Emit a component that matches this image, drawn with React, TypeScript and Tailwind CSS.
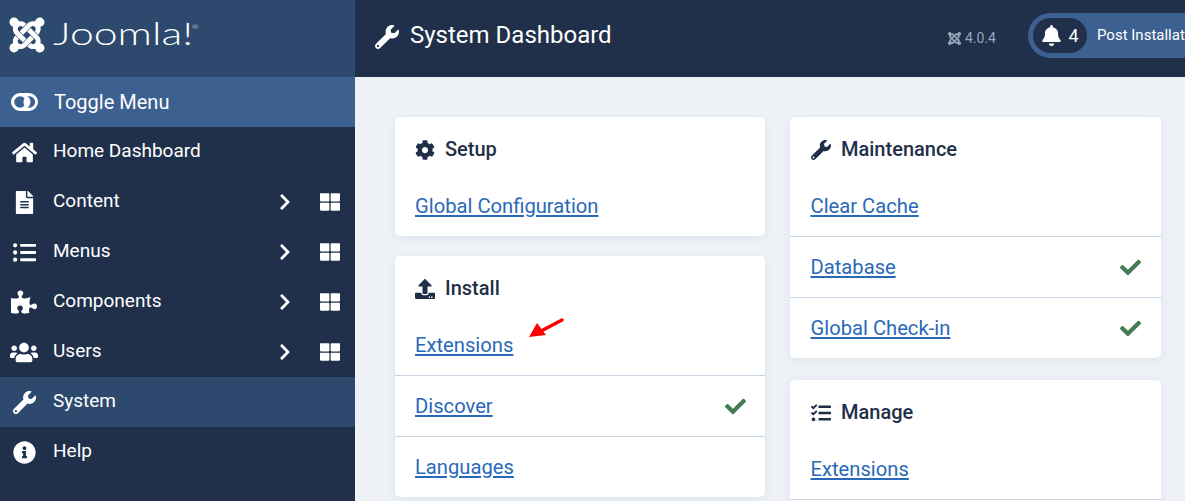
import React from "react";
import { FaJoomla, FaHome, FaFileAlt, FaListUl, FaPuzzlePiece, FaUsers, FaWrench, FaInfoCircle, FaCog, FaBell, FaCheck, FaTasks, FaChevronRight, FaThLarge, FaUpload } from "react-icons/fa";

type MenuProps = { icon: React.ReactNode; label: string; sub?: boolean; active?: boolean };

function MenuRow({ icon, label, sub, active }: MenuProps) {
  return (
    <div className={`flex h-[50px] items-center pl-[10px] text-[19px] text-white ${active ? "bg-[#2d4a6e]" : ""}`}>
      <span className="flex w-[28px] justify-center">{icon}</span>
      <span className="ml-[15px] pb-[2px]">{label}</span>
      {sub && (
        <span className="ml-auto flex items-center pr-[15px]">
          <FaChevronRight className="mr-[26px] text-[18px]" />
          <FaThLarge className="text-[20px]" />
        </span>
      )}
    </div>
  );
}

function LinkRow({ label, check, first, wide }: { label: string; check?: boolean; first?: boolean; wide?: boolean }) {
  return (
    <div className={`flex h-[61px] items-center justify-between ${wide ? "pl-[20.5px] pr-[20px]" : "pl-[20px] pr-[19px]"} ${first ? "pt-[1px]" : "border-t border-[#c9d5e5]"}`}>
      <a className="text-[20.2px] text-[#2a69b8] underline" href="#">{label}</a>
      {check && <FaCheck className="text-[21px] text-[#457d54]" />}
    </div>
  );
}

function Card({ icon, title, wide, children }: { icon: React.ReactNode; title: string; wide?: boolean; children: React.ReactNode }) {
  return (
    <section className="rounded-[5px] bg-white shadow-[0_2px_8px_rgba(30,50,90,0.08)]">
      <h2 className={`flex h-[58px] items-end pb-[14px] text-[20px] font-medium leading-[24px] text-[#1f2f48] ${wide ? "pl-[21px]" : "pl-[20px]"}`}>
        <span className="flex w-[30px] items-center pb-[1px]">{icon}</span>
        {title}
      </h2>
      {children}
    </section>
  );
}

export default function App() {
  return (
    <div className="flex h-screen w-full overflow-hidden bg-[#eef2f7] font-['Roboto',sans-serif]">
      <aside className="w-[355px] shrink-0 bg-[#20304a]">
        <div className="flex h-[77px] items-start bg-[#2d4a6e] pl-[7px] pt-[15px] text-white">
          <FaJoomla className="text-[40px]" />
          <span className="ml-[6px] mt-[-1px] origin-left scale-x-[1.38] font-['Lato',sans-serif] text-[31px] font-light leading-[38px]">
            Joomla!<span className="ml-[-1px] align-[16px] text-[6px] leading-none">®</span>
          </span>
        </div>
        <div className="flex h-[50px] items-center bg-[#3c6090] pl-[11px] text-[20px] text-white">
          <svg width="27" height="18" viewBox="0 0 27 18" aria-hidden="true">
            <path fill="#fff" fillRule="evenodd" d="M9 0h9a9 9 0 0 1 0 18H9A9 9 0 0 1 9 0Zm0 3.2a5.8 5.8 0 0 0 0 11.6 5.8 5.8 0 0 0 4.5-2.2 7.5 7.5 0 0 1 0-7.2A5.8 5.8 0 0 0 9 3.2Zm7.5 0a7 7 0 0 1-.2 11.6h2a5.8 5.8 0 0 0 0-11.6Z" />
          </svg>
          <span className="ml-[16px]">Toggle Menu</span>
        </div>
        <MenuRow icon={<FaHome className="text-[25px]" />} label="Home Dashboard" />
        <MenuRow icon={<FaFileAlt className="text-[23px]" />} label="Content" sub />
        <MenuRow icon={<FaListUl className="text-[23px]" />} label="Menus" sub />
        <MenuRow icon={<FaPuzzlePiece className="text-[26px]" />} label="Components" sub />
        <MenuRow icon={<FaUsers className="text-[29px]" />} label="Users" sub />
        <MenuRow icon={<FaWrench className="text-[23px]" />} label="System" active />
        <MenuRow icon={<FaInfoCircle className="text-[23px]" />} label="Help" />
      </aside>
      <div className="min-w-0 flex-1">
        <header className="flex h-[77px] items-center overflow-hidden bg-[#20304a] text-white">
          <FaWrench className="ml-[20px] mb-[3px] shrink-0 text-[24px]" />
          <h1 className="ml-[11px] shrink-0 pb-[8px] text-[24px]">System Dashboard</h1>
          <div className="ml-auto flex shrink-0 items-center">
            <span className="flex w-[81px] items-center text-[14px] text-[#98a6ba]">
              <FaJoomla className="mr-[3px] text-[15px]" />4.0.4
            </span>
            <div className="mb-[6px] flex h-[45px] w-[157px] shrink-0 items-center overflow-hidden rounded-l-full bg-[#3c6090] pl-[5px]">
              <span className="flex h-[35px] w-[54px] shrink-0 items-center justify-center rounded-full bg-[#20304a]">
                <FaBell className="text-[21px]" />
                <span className="ml-[6px] text-[18px]">4</span>
              </span>
              <span className="ml-[10px] whitespace-nowrap text-[15px]">Post Installation</span>
            </div>
          </div>
        </header>
        <main className="relative flex items-start gap-[25px] pl-[40px] pt-[40px]">
          <div className="flex w-[370px] flex-col gap-[20px]">
            <Card icon={<FaCog className="text-[20px]" />} title="Setup">
              <LinkRow first label="Global Configuration" />
            </Card>
            <Card icon={<FaUpload className="text-[20px]" />} title="Install">
              <LinkRow first label="Extensions" />
              <LinkRow label="Discover" check />
              <LinkRow label="Languages" />
            </Card>
          </div>
          <div className="flex w-[371px] flex-col gap-[22px]">
            <Card wide icon={<FaWrench className="text-[20px]" />} title="Maintenance">
              <LinkRow wide first label="Clear Cache" />
              <LinkRow wide label="Database" check />
              <LinkRow wide label="Global Check-in" check />
            </Card>
            <Card wide icon={<FaTasks className="text-[20px]" />} title="Manage">
              <LinkRow wide first label="Extensions" />
              <div className="h-[20px] border-t border-[#c9d5e5]" />
            </Card>
          </div>
          <svg className="absolute left-[174px] top-[241px]" width="36" height="20" viewBox="0 0 36 20" aria-hidden="true">
            <path d="M33 2 14 12" stroke="#f00" strokeWidth="3.4" strokeLinecap="round" />
            <path d="M0 19 8 5l9 12Z" fill="#f00" />
          </svg>
        </main>
      </div>
    </div>
  );
}
